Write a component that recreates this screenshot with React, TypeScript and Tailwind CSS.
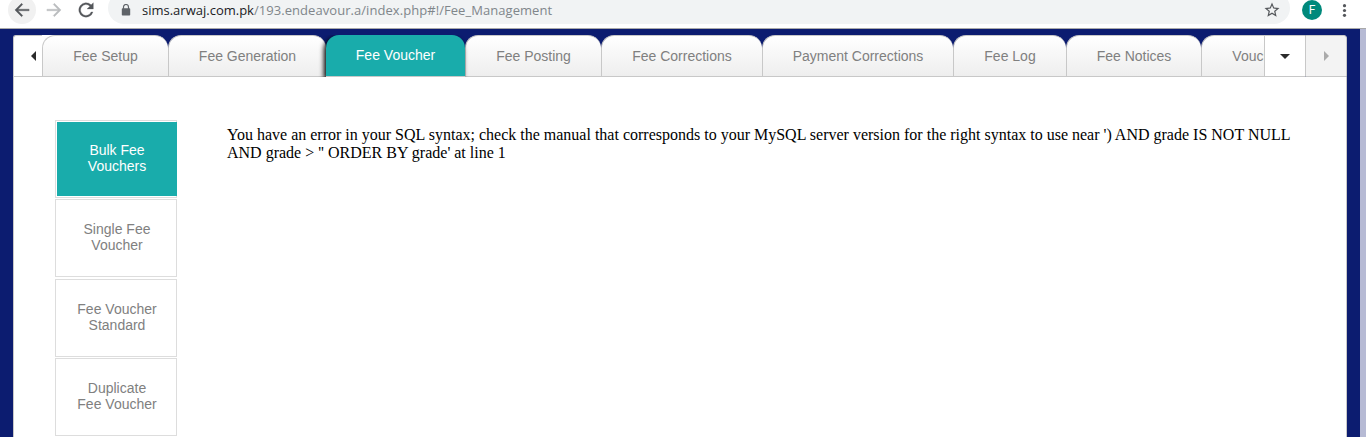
import React from "react";

const tabs = [
  { label: "Fee Setup", width: "w-[126px]" },
  { label: "Fee Generation", width: "w-[158px]" },
  { label: "Fee Voucher", width: "w-[139px]", active: true },
  { label: "Fee Posting", width: "w-[136px]" },
  { label: "Fee Corrections", width: "w-[161px]" },
  { label: "Payment Corrections", width: "w-[191px]" },
  { label: "Fee Log", width: "w-[113px]" },
  { label: "Fee Notices", width: "w-[135px]" },
  { label: "Vouchers", width: "w-[120px]" },
];

const sections = [
  { lines: ["Bulk Fee", "Vouchers"], active: true, gap: "mb-px" },
  { lines: ["Single Fee", "Voucher"], gap: "mb-[2px]" },
  { lines: ["Fee Voucher", "Standard"], gap: "mb-px" },
  { lines: ["Duplicate", "Fee Voucher"], gap: "" },
];

function BrowserBar() {
  return (
    <header className="flex h-[29px] shrink-0 items-start border-b border-[#a9a9a9] bg-white pl-2">
      <div className="-mt-1 flex size-7 shrink-0 items-center justify-center rounded-full bg-[#f1f1f1]">
        <svg width="20" height="20" viewBox="0 0 24 24" fill="#54575b" stroke="#54575b" strokeWidth="0.4">
          <path d="M20.5 11H7.3l5.6-5.6L11.5 4l-8 8 8 8 1.4-1.4L7.3 13h13.2z" />
        </svg>
      </div>
      <svg className="ml-2 shrink-0" width="20" height="20" viewBox="0 0 24 24" fill="#babcbe" stroke="#babcbe" strokeWidth="0.4">
        <path d="M3.5 11h13.2l-5.6-5.6L12.5 4l8 8-8 8-1.4-1.4 5.6-5.6H3.5z" />
      </svg>
      <svg className="ml-3 shrink-0" width="20" height="20" viewBox="0 0 24 24" fill="#54575b" stroke="#54575b" strokeWidth="0.3">
        <path d="M18.2 5.8A8.7 8.7 0 1 0 20.4 14.3h-2.3A6.5 6.5 0 1 1 16.6 7.4L13.2 10.8H20.8V3.2z" />
      </svg>
      <div className="-mt-2 ml-3 flex h-8 w-[1182px] shrink-0 items-center rounded-full bg-[#f1f3f4] pl-[13px] pr-2 pt-1">
        <svg width="10" height="12" viewBox="0 0 10 12" className="shrink-0">
          <path d="M2.5 5V3a2.5 2.5 0 0 1 5 0v2" fill="none" stroke="#5f6368" strokeWidth="1.2" />
          <rect x="0.8" y="4.2" width="8.4" height="7.3" rx="0.8" fill="#5f6368" />
        </svg>
        <span className="ml-[11px] whitespace-nowrap font-['Open_Sans',sans-serif] text-[13px] leading-4 tracking-[0.055px] text-[#80868b]">
          <span className="tracking-normal text-[#202124]">sims.arwaj.com.pk</span>/193.endeavour.a/index.php#!/Fee_Management
        </span>
        <svg className="ml-auto mr-px shrink-0" width="18" height="18" viewBox="0 0 24 24" fill="#54575b">
          <path d="M22 9.24l-7.19-.62L12 2 9.19 8.63 2 9.24l5.46 4.73L5.82 21 12 17.27 18.18 21l-1.63-7.03L22 9.24zM12 15.4l-3.76 2.27 1-4.28-3.32-2.88 4.38-.38L12 6.1l1.71 4.04 4.38.38-3.32 2.88 1 4.28L12 15.4z" />
        </svg>
      </div>
      <div className="ml-3 flex size-5 shrink-0 items-center justify-center rounded-full bg-[#00897b] font-['Roboto',sans-serif] text-[12px] leading-5 text-white">
        F
      </div>
      <svg className="ml-5 mt-1 shrink-0" width="5" height="14" viewBox="0 0 5 14" fill="#54575b">
        <circle cx="2.5" cy="1.7" r="1.6" />
        <circle cx="2.5" cy="6.5" r="1.6" />
        <circle cx="2.5" cy="11.3" r="1.6" />
      </svg>
    </header>
  );
}

function TabStrip() {
  return (
    <nav className="flex h-[42px] shrink-0">
      <button className="flex w-[29px] shrink-0 items-center justify-end rounded-tl-[3px] border-b border-l border-t border-[#c8c8c8] bg-white pr-[6px]">
        <svg width="5" height="10" viewBox="0 0 5 10">
          <path d="M5 0v10L0 5z" fill="#2b2b2b" />
        </svg>
      </button>
      <div className="flex w-[1222px] shrink-0 overflow-hidden bg-[linear-gradient(90deg,#fff_14px,#0c1c70_14px)]">
        {tabs.map((tab) =>
          tab.active ? (
            <button
              key={tab.label}
              className={`${tab.width} relative shrink-0 rounded-t-[13px] border-b border-[#c8c8c8] bg-[#19acab] text-[14px] text-white shadow-[-2px_2px_5px_#000]`}
            >
              {tab.label}
            </button>
          ) : (
            <button
              key={tab.label}
              className={`${tab.width} shrink-0 whitespace-nowrap rounded-t-[13px] border-b border-l border-t border-[#c8c8c8] bg-linear-to-b from-white to-[#eeeeee] text-[14px] text-[#808080]`}
            >
              {tab.label}
            </button>
          ),
        )}
      </div>
      <button className="flex w-[41px] shrink-0 items-center justify-center border-b border-l border-t border-[#c8c8c8] bg-white">
        <svg width="10" height="5" viewBox="0 0 10 5">
          <path d="M0 0h10L5 5z" fill="#2b2b2b" />
        </svg>
      </button>
      <button className="flex w-[42px] shrink-0 items-center justify-center rounded-tr-[3px] border border-[#c8c8c8] bg-[#f3f3f3]">
        <svg width="5" height="10" viewBox="0 0 5 10">
          <path d="M0 0v10l5-5z" fill="#aaaaaa" />
        </svg>
      </button>
    </nav>
  );
}

export default function App() {
  return (
    <div className="flex h-[437px] w-[1366px] flex-col overflow-hidden font-['Liberation_Sans',Arial,sans-serif]">
      <BrowserBar />
      <div className="flex min-h-0 flex-1 bg-[#0c1c70] pl-[13px] pt-[6px]">
        <div className="flex w-[1334px] shrink-0 flex-col">
          <TabStrip />
          <main className="flex flex-1 border-x border-[#c8c8c8] bg-white pl-[41px] pt-[43px]">
            <div className="w-[122px] shrink-0">
              {sections.map((section) => (
                <button
                  key={section.lines.join(" ")}
                  className={`flex h-[78px] w-full border border-[#dddddd] ${section.gap} ${
                    section.active ? "py-px pl-px text-white" : "text-[#808080]"
                  }`}
                >
                  <span
                    className={`flex h-full flex-1 flex-col items-center text-[14px] leading-4 ${
                      section.active ? "-mr-px bg-[#19acab] pt-5" : "pl-[2px] pt-[21px]"
                    }`}
                  >
                    {section.lines.map((line) => (
                      <span key={line}>{line}</span>
                    ))}
                  </span>
                </button>
              ))}
            </div>
            <p className="ml-[50px] mt-[6px] w-[1080px] font-['Liberation_Serif',serif] text-[16px] leading-[18px] text-black">
              You have an error in your SQL syntax; check the manual that corresponds to your MySQL server version for the right syntax to use near ') AND grade IS NOT NULL AND grade &gt; '' ORDER BY grade' at line 1
            </p>
          </main>
        </div>
        <div className="-mt-[6px] ml-auto w-[6px] bg-[#b6bad4]" />
      </div>
    </div>
  );
}
